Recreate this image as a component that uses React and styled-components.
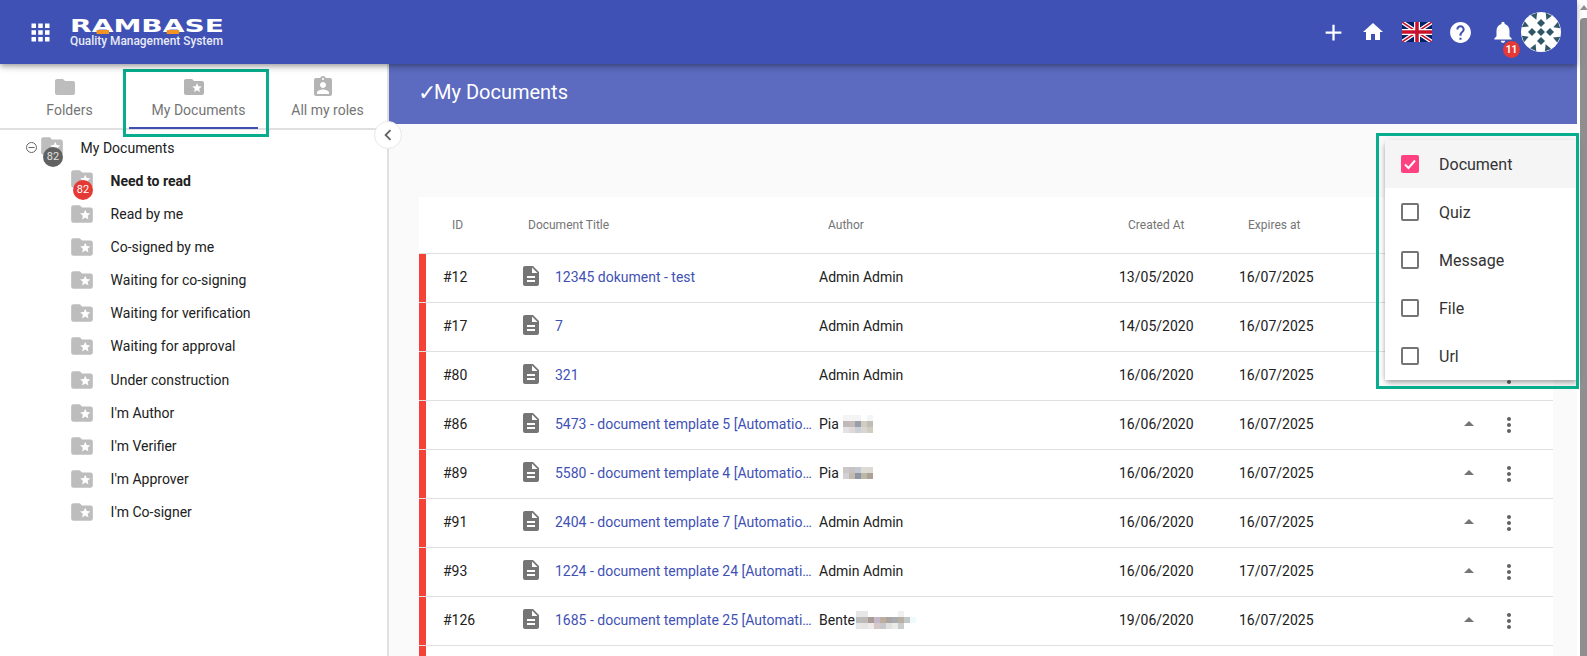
import React from "react";
import styled, { createGlobalStyle } from "styled-components";

const GlobalStyle = createGlobalStyle`
  html, body {
    margin: 0;
    height: 100%;
    overflow: hidden;
    background: #fff;
    font-family: Roboto, "Liberation Sans", sans-serif;
    font-size: 14px;
    color: #212121;
  }
  * {
    box-sizing: border-box;
  }
`;

const paths = {
  apps: "M4 8h4V4H4v4zm6 12h4v-4h-4v4zm-6 0h4v-4H4v4zm0-6h4v-4H4v4zm6 0h4v-4h-4v4zm6-10v4h4V4h-4zm-6 4h4V4h-4v4zm6 6h4v-4h-4v4zm0 6h4v-4h-4v4z",
  add: "M19 13h-6v6h-2v-6H5v-2h6V5h2v6h6v2z",
  home: "M10 20v-6h4v6h5v-8h3L12 3 2 12h3v8z",
  help: "M12 2C6.48 2 2 6.48 2 12s4.48 10 10 10 10-4.48 10-10S17.52 2 12 2zm1 17h-2v-2h2v2zm2.07-7.75l-.9.92C13.45 12.9 13 13.5 13 15h-2v-.5c0-1.1.45-2.1 1.17-2.83l1.24-1.26c.37-.36.59-.86.59-1.41 0-1.1-.9-2-2-2s-2 .9-2 2H8c0-2.21 1.79-4 4-4s4 1.79 4 4c0 .88-.36 1.68-.93 2.25z",
  bell: "M12 22c1.1 0 2-.9 2-2h-4c0 1.1.89 2 2 2zm6-6v-5c0-3.07-1.64-5.64-4.5-6.32V4c0-.83-.67-1.5-1.5-1.5s-1.5.67-1.5 1.5v.68C7.63 5.36 6 7.92 6 11v5l-2 2v1h16v-1l-2-2z",
  folder: "M10 4H4c-1.1 0-1.99.9-1.99 2L2 18c0 1.1.9 2 2 2h16c1.1 0 2-.9 2-2V8c0-1.1-.9-2-2-2h-8l-2-2z",
  folderStar: "M20 6h-8l-2-2H4c-1.1 0-1.99.9-1.99 2L2 18c0 1.1.9 2 2 2h16c1.1 0 2-.9 2-2V8c0-1.1-.9-2-2-2zm-2.06 11L15 15.28 12.06 17l.78-3.33-2.59-2.24 3.41-.29L15 8l1.34 3.14 3.41.29-2.59 2.24.78 3.33z",
  roles: "M19 3h-4.18C14.4 1.84 13.3 1 12 1c-1.3 0-2.4.84-2.82 2H5c-1.1 0-2 .9-2 2v14c0 1.1.9 2 2 2h14c1.1 0 2-.9 2-2V5c0-1.1-.9-2-2-2zm-7 0c.55 0 1 .45 1 1s-.45 1-1 1-1-.45-1-1 .45-1 1-1zm0 4c1.66 0 3 1.34 3 3s-1.34 3-3 3-3-1.34-3-3 1.34-3 3-3zm6 12H6v-1.4c0-2 4-3.1 6-3.1s6 1.1 6 3.1V19z",
  doc: "M14 2H6c-1.1 0-1.99.9-1.99 2L4 20c0 1.1.89 2 1.99 2H18c1.1 0 2-.9 2-2V8l-6-6zm2 16H8v-2h8v2zm0-4H8v-2h8v2zm-3-5V3.5L18.5 9H13z",
  more: "M12 8c1.1 0 2-.9 2-2s-.9-2-2-2-2 .9-2 2 .9 2 2 2zm0 2c-1.1 0-2 .9-2 2s.9 2 2 2 2-.9 2-2-.9-2-2-2zm0 6c-1.1 0-2 .9-2 2s.9 2 2 2 2-.9 2-2-.9-2-2-2z",
  dropUp: "M7 14l5-5 5 5z",
  chevronLeft: "M15.41 7.41L14 6l-6 6 6 6 1.41-1.41L10.83 12z",
};

const Icon = ({ name, size = 24, color = "currentColor" }) => (
  <svg width={size} height={size} viewBox="0 0 24 24" fill={color} style={{ display: "block", flex: "none" }}>
    <path d={paths[name]} />
  </svg>
);

const Flag = () => (
  <svg width="30" height="20" viewBox="0 0 60 40" style={{ display: "block" }}>
    <rect width="60" height="40" fill="#012169" />
    <path d="M0 0L60 40M60 0L0 40" stroke="#fff" strokeWidth="8" />
    <path d="M0 0L60 40M60 0L0 40" stroke="#c8102e" strokeWidth="3" />
    <path d="M30 0V40M0 20H60" stroke="#fff" strokeWidth="12" />
    <path d="M30 0V40M0 20H60" stroke="#c8102e" strokeWidth="7" />
  </svg>
);

const avatarAngles = [0, 45, 90, 135, 180, 225, 270, 315];

const Avatar = () => (
  <svg width="40" height="40" viewBox="-20 -20 40 40" style={{ display: "block" }}>
    <circle r="20" fill="#fff" />
    <path d="M0 -4L4 0L0 4L-4 0Z" fill="#2f5768" />
    {avatarAngles.map((a) => (
      <g key={a} transform={`rotate(${a})`}>
        {a % 90 === 0 && <path d="M0 -13L4 -9L0 -5L-4 -9Z" fill="#2f5768" />}
        <path d="M-3 -19.6L3.8 -19.2L0.4 -13.2Z" fill="#2f5768" transform="rotate(22.5)" />
      </g>
    ))}
  </svg>
);

const Page = styled.div`
  display: flex;
  width: 100%;
  height: 100vh;
  overflow: hidden;
`;

const Main = styled.div`
  flex: 1;
  min-width: 0;
  display: flex;
  flex-direction: column;
`;

const ScrollTrack = styled.div`
  width: 10px;
  flex: none;
  display: flex;
  flex-direction: column;
  padding: 5px 0 0 3px;
  background: #fff;
`;

const ScrollArrow = styled.div`
  width: 0;
  height: 0;
  border-left: 4px solid transparent;
  border-right: 4px solid transparent;
  border-bottom: 5px solid #8f8f8f;
`;

const ScrollThumb = styled.div`
  flex: 1;
  margin-top: 8px;
  background: #8f8f8f;
  border-radius: 4px 0 0 0;
`;

const Header = styled.header`
  height: 64px;
  flex: none;
  position: relative;
  z-index: 3;
  display: flex;
  align-items: center;
  background: #3f51b5;
  color: #fff;
  padding-left: 27px;
  padding-right: 16px;
  box-shadow: 0 2px 4px -1px rgba(0, 0, 0, 0.2), 0 4px 5px 0 rgba(0, 0, 0, 0.14), 0 1px 10px 0 rgba(0, 0, 0, 0.12);
`;

const Logo = styled.div`
  display: flex;
  flex-direction: column;
  margin-left: 16px;
  width: 152px;
`;

const LogoMark = styled.div`
  font-family: "DejaVu Sans", sans-serif;
  font-weight: 700;
  font-size: 18px;
  line-height: 15px;
  height: 15px;
  margin-top: 2px;
  white-space: nowrap;
  transform: scaleX(1.56);
  transform-origin: left center;
`;

const LogoA = styled.span`
  position: relative;
  &::after {
    content: "";
    position: absolute;
    left: 3px;
    right: 3px;
    bottom: 2px;
    height: 4px;
    background: #f39323;
  }
`;

const LogoTag = styled.div`
  font-size: 11.9px;
  font-weight: 500;
  line-height: 14px;
  margin-top: 1px;
  white-space: nowrap;
  color: #e8eaf6;
`;

const HeaderActions = styled.div`
  margin-left: auto;
  display: flex;
  align-items: center;
`;

const HeaderIcon = styled.div`
  display: flex;
  align-items: center;
  justify-content: center;
  position: relative;
  width: ${(p) => p.$w}px;
`;

const BellBadge = styled.span`
  position: absolute;
  left: 19px;
  top: 22px;
  width: 17px;
  height: 17px;
  border-radius: 50%;
  background: #e53935;
  color: #fff;
  font-size: 10px;
  font-weight: 700;
  line-height: 17px;
  text-align: center;
`;

const Body = styled.div`
  flex: 1;
  min-height: 0;
  display: flex;
`;

const Sidebar = styled.aside`
  width: 389px;
  flex: none;
  position: relative;
  z-index: 2;
  background: #fff;
  border-right: 2px solid #e0e0e0;
`;

const Tabs = styled.div`
  display: flex;
  height: 66px;
  border-bottom: 2px solid #e0e0e0;
`;

const Tab = styled.div`
  position: relative;
  width: 129px;
  display: flex;
  flex-direction: column;
  align-items: center;
  padding-top: 11px;
  color: #757575;
  border-bottom: 2px solid ${(p) => (p.$active ? "#3f51b5" : "transparent")};
  margin-bottom: -1px;
`;

const TabLabel = styled.span`
  margin: 1px 0 0 10px;
  font-size: 14px;
  line-height: 20px;
  white-space: nowrap;
`;

const Mark = styled.div`
  position: absolute;
  border: 3px solid #07ad8d;
  pointer-events: none;
  z-index: 5;
`;

const TabMark = styled(Mark)`
  left: -6px;
  right: -11px;
  top: 5px;
  height: 68px;
`;

const PopoverMark = styled(Mark)`
  left: -9px;
  right: -2px;
  top: -7px;
  bottom: -9px;
`;

const CollapseButton = styled.button`
  position: absolute;
  right: -15px;
  top: 57px;
  width: 28px;
  height: 28px;
  padding: 0;
  display: flex;
  align-items: center;
  justify-content: center;
  border: 1px solid #e8e8e8;
  border-radius: 50%;
  background: #fff;
  color: #616161;
`;

const Tree = styled.div`
  padding-top: 1px;
`;

const TreeRow = styled.div`
  height: 33.15px;
  display: flex;
  align-items: center;
  padding-left: ${(p) => (p.$root ? 26 : 69)}px;
`;

const Toggle = styled.svg`
  flex: none;
  margin-right: 2px;
`;

const FolderWrap = styled.div`
  position: relative;
  width: 26px;
  height: 26px;
  flex: none;
  margin-top: ${(p) => (p.$up ? -3 : 0)}px;
`;

const TreeBadge = styled.span`
  position: absolute;
  left: 4px;
  top: 14px;
  width: 20px;
  height: 20px;
  border-radius: 50%;
  background: ${(p) => p.$bg};
  color: ${(p) => p.$fg};
  font-size: 11px;
  line-height: 20px;
  text-align: center;
`;

const TreeLabel = styled.span`
  margin-left: 15.6px;
  font-size: 14px;
  font-weight: ${(p) => (p.$bold ? 700 : 400)};
  white-space: nowrap;
`;

const Content = styled.main`
  flex: 1;
  min-width: 0;
  position: relative;
  display: flex;
  flex-direction: column;
  background: #fafafa;
`;

const TitleBar = styled.div`
  height: 60px;
  flex: none;
  display: flex;
  align-items: center;
  padding: 0 0 4px 29px;
  background: #5c6bc0;
  color: #fff;
  font-size: 20px;
`;

const TitleCheck = styled.span`
  font-size: 22px;
  margin-right: -2px;
`;

const TableArea = styled.div`
  flex: 1;
  min-height: 0;
  overflow: hidden;
  padding: 73px 24px 0 30px;
`;

const Table = styled.div`
  background: #fff;
`;

const HeadRow = styled.div`
  height: 57px;
  display: grid;
  grid-template-columns: 7px 97px 296px 300px 120px 1fr;
  align-items: center;
  border-bottom: 1px solid #e0e0e0;
  font-size: 12px;
  color: #757575;
`;

const HeadCell = styled.div`
  padding-left: ${(p) => p.$pad}px;
`;

const Row = styled.div`
  height: 49px;
  display: grid;
  grid-template-columns: 7px 97px 32px 264px 300px 120px 218px 40px 24px 1fr;
  align-items: center;
  border-bottom: 1px solid #e0e0e0;
`;

const Stripe = styled.div`
  align-self: stretch;
  background: #f44336;
`;

const TextCell = styled.div`
  margin-bottom: 2px;
`;

const IdCell = styled(TextCell)`
  padding-left: 17px;
`;

const DocIcon = styled.div`
  margin: -4px 0 0 -4px;
  color: #757575;
`;

const TitleLink = styled.a`
  display: block;
  margin-bottom: 2px;
  color: #3f51b5;
  padding-right: 7px;
  white-space: nowrap;
  overflow: hidden;
  text-overflow: ellipsis;
`;

const AuthorCell = styled(TextCell)`
  display: flex;
  align-items: center;
  gap: ${(p) => (p.$tight ? 1 : 4)}px;
`;

const Mosaic = styled.div`
  display: grid;
  grid-template-columns: repeat(${(p) => p.$cols}, 6px);
  grid-auto-rows: 6px;
`;

const Pixel = styled.i`
  display: block;
  background: ${(p) => p.$c};
`;

const ArrowCell = styled.div`
  color: #757575;
  margin-top: -3px;
`;

const MoreCell = styled.div`
  color: #616161;
`;

const Popover = styled.div`
  position: absolute;
  left: 996px;
  right: 0;
  top: 76px;
  height: 240px;
  z-index: 4;
  background: #fff;
  border-radius: 4px 0 0 4px;
  box-shadow: 0 2px 4px -1px rgba(0, 0, 0, 0.2), 0 4px 5px 0 rgba(0, 0, 0, 0.14), 0 1px 10px 0 rgba(0, 0, 0, 0.12);
`;

const PopoverItem = styled.div`
  height: 48px;
  display: flex;
  align-items: center;
  gap: 20px;
  padding-left: 16px;
  font-size: 16px;
  color: #333;
  background: ${(p) => (p.$checked ? "#f5f5f5" : "#fff")};
  border-radius: ${(p) => (p.$checked ? "4px 0 0 0" : "0")};
`;

const Checkbox = styled.span`
  width: 18px;
  height: 18px;
  flex: none;
  display: flex;
  align-items: center;
  justify-content: center;
  border-radius: 2px;
  border: ${(p) => (p.$checked ? "none" : "2px solid #757575")};
  background: ${(p) => (p.$checked ? "#ff4081" : "transparent")};
`;

const treeItems = [
  "Read by me",
  "Co-signed by me",
  "Waiting for co-signing",
  "Waiting for verification",
  "Waiting for approval",
  "Under construction",
  "I'm Author",
  "I'm Verifier",
  "I'm Approver",
  "I'm Co-signer",
];

const piaOne = ["#f4f4f4", "#f4f4f4", "#f4f4f4", "#ffffff", "#f2f6f6", "#bfb9b9", "#c4bcb8", "#9a9eac", "#d0cdbe", "#c0bdb6", "#e4e2e4", "#dfd9d9", "#ccd0d8", "#d8d6d0", "#d2ccc0"];
const piaTwo = ["#cbc6c8", "#c8c2c2", "#c4c8d2", "#dcdbd4", "#dcdad2", "#d2d0d4", "#c4bab0", "#9095a4", "#bbb8aa", "#aaa296"];
const bente = [
  "#e6e6e6", "#e6e6e6", "#ffffff", "#ffffff", "#ffffff", "#ffffff", "#ffffff", "#f0f0f0", "#ffffff", "#ffffff",
  "#bdbdbd", "#bdbab8", "#a89c94", "#c6b8cc", "#bcae9c", "#aca4a4", "#a8acb0", "#b8b0a0", "#c4c8c8", "#eefafc",
  "#e6e6e6", "#e4e4e4", "#eeeaea", "#d4c8c8", "#c8c8cc", "#e0e0e0", "#eceae6", "#c8cccc", "#ffffff", "#ffffff",
];

const rows = [
  { id: "#12", title: "12345 dokument - test", author: "Admin Admin", created: "13/05/2020", expires: "16/07/2025" },
  { id: "#17", title: "7", author: "Admin Admin", created: "14/05/2020", expires: "16/07/2025" },
  { id: "#80", title: "321", author: "Admin Admin", created: "16/06/2020", expires: "16/07/2025" },
  { id: "#86", title: "5473 - document template 5 [Automation test]", author: "Pia", blur: piaOne, cols: 5, created: "16/06/2020", expires: "16/07/2025" },
  { id: "#89", title: "5580 - document template 4 [Automation test]", author: "Pia", blur: piaTwo, cols: 5, created: "16/06/2020", expires: "16/07/2025" },
  { id: "#91", title: "2404 - document template 7 [Automation test]", author: "Admin Admin", created: "16/06/2020", expires: "16/07/2025" },
  { id: "#93", title: "1224 - document template 24 [Automation test]", author: "Admin Admin", created: "16/06/2020", expires: "17/07/2025" },
  { id: "#126", title: "1685 - document template 25 [Automation test]", author: "Bente", blur: bente, cols: 10, tight: true, created: "19/06/2020", expires: "16/07/2025" },
];

const filters = ["Document", "Quiz", "Message", "File", "Url"];

function App() {
  return (
    <Page>
      <GlobalStyle />
      <Main>
        <Header>
          <Icon name="apps" size={27} />
          <Logo>
            <LogoMark>
              R<LogoA>A</LogoA>MB<LogoA>A</LogoA>SE
            </LogoMark>
            <LogoTag>Quality Management System</LogoTag>
          </Logo>
          <HeaderActions>
            <HeaderIcon $w={30}><Icon name="add" size={27} /></HeaderIcon>
            <HeaderIcon $w={49}><Icon name="home" size={24} /></HeaderIcon>
            <HeaderIcon $w={40}><Flag /></HeaderIcon>
            <HeaderIcon $w={47}><Icon name="help" size={25} /></HeaderIcon>
            <HeaderIcon $w={37}>
              <Icon name="bell" size={26} />
              <BellBadge>11</BellBadge>
            </HeaderIcon>
            <Avatar />
          </HeaderActions>
        </Header>
        <Body>
          <Sidebar>
            <Tabs>
              <Tab>
                <Icon name="folder" size={24} color="#bdbdbd" />
                <TabLabel>Folders</TabLabel>
              </Tab>
              <Tab $active>
                <Icon name="folderStar" size={24} color="#b4b4b4" />
                <TabLabel>My Documents</TabLabel>
                <TabMark />
              </Tab>
              <Tab>
                <Icon name="roles" size={24} color="#b4b4b4" />
                <TabLabel>All my roles</TabLabel>
              </Tab>
            </Tabs>
            <CollapseButton>
              <Icon name="chevronLeft" size={22} />
            </CollapseButton>
            <Tree>
              <TreeRow $root>
                <Toggle width="11" height="11" viewBox="0 0 11 11">
                  <circle cx="5.5" cy="5.5" r="5" fill="none" stroke="#666" />
                  <path d="M2.5 5.5H8.5" stroke="#666" />
                </Toggle>
                <FolderWrap $up>
                  <Icon name="folderStar" size={26} color="#bdbdbd" />
                  <TreeBadge $bg="#616161" $fg="#e0e0e0">82</TreeBadge>
                </FolderWrap>
                <TreeLabel>My Documents</TreeLabel>
              </TreeRow>
              <TreeRow>
                <FolderWrap $up>
                  <Icon name="folderStar" size={26} color="#bdbdbd" />
                  <TreeBadge $bg="#e53935" $fg="#fff">82</TreeBadge>
                </FolderWrap>
                <TreeLabel $bold>Need to read</TreeLabel>
              </TreeRow>
              {treeItems.map((item) => (
                <TreeRow key={item}>
                  <FolderWrap>
                    <Icon name="folderStar" size={26} color="#bdbdbd" />
                  </FolderWrap>
                  <TreeLabel>{item}</TreeLabel>
                </TreeRow>
              ))}
            </Tree>
          </Sidebar>
          <Content>
            <TitleBar>
              <TitleCheck>✓</TitleCheck>My Documents
            </TitleBar>
            <TableArea>
              <Table>
                <HeadRow>
                  <span />
                  <HeadCell $pad={26}>ID</HeadCell>
                  <HeadCell $pad={5}>Document Title</HeadCell>
                  <HeadCell $pad={9}>Author</HeadCell>
                  <HeadCell $pad={9}>Created At</HeadCell>
                  <HeadCell $pad={9}>Expires at</HeadCell>
                </HeadRow>
                {rows.map((row) => (
                  <Row key={row.id}>
                    <Stripe />
                    <IdCell>{row.id}</IdCell>
                    <DocIcon><Icon name="doc" /></DocIcon>
                    <TitleLink>{row.title}</TitleLink>
                    <AuthorCell $tight={row.tight}>
                      {row.author}
                      {row.blur && (
                        <Mosaic $cols={row.cols}>
                          {row.blur.map((c, i) => (
                            <Pixel key={i} $c={c} />
                          ))}
                        </Mosaic>
                      )}
                    </AuthorCell>
                    <TextCell>{row.created}</TextCell>
                    <TextCell>{row.expires}</TextCell>
                    <ArrowCell><Icon name="dropUp" /></ArrowCell>
                    <MoreCell><Icon name="more" /></MoreCell>
                  </Row>
                ))}
                <Row>
                  <Stripe />
                </Row>
              </Table>
            </TableArea>
            <Popover>
              {filters.map((f, i) => (
                <PopoverItem key={f} $checked={i === 0}>
                  <Checkbox $checked={i === 0}>
                    {i === 0 && (
                      <svg width="14" height="14" viewBox="0 0 14 14" fill="none">
                        <path d="M2 7.5L5.5 11L12 3.5" stroke="#fff" strokeWidth="2" />
                      </svg>
                    )}
                  </Checkbox>
                  {f}
                </PopoverItem>
              ))}
              <PopoverMark />
            </Popover>
          </Content>
        </Body>
      </Main>
      <ScrollTrack>
        <ScrollArrow />
        <ScrollThumb />
      </ScrollTrack>
    </Page>
  );
}

export default App;
